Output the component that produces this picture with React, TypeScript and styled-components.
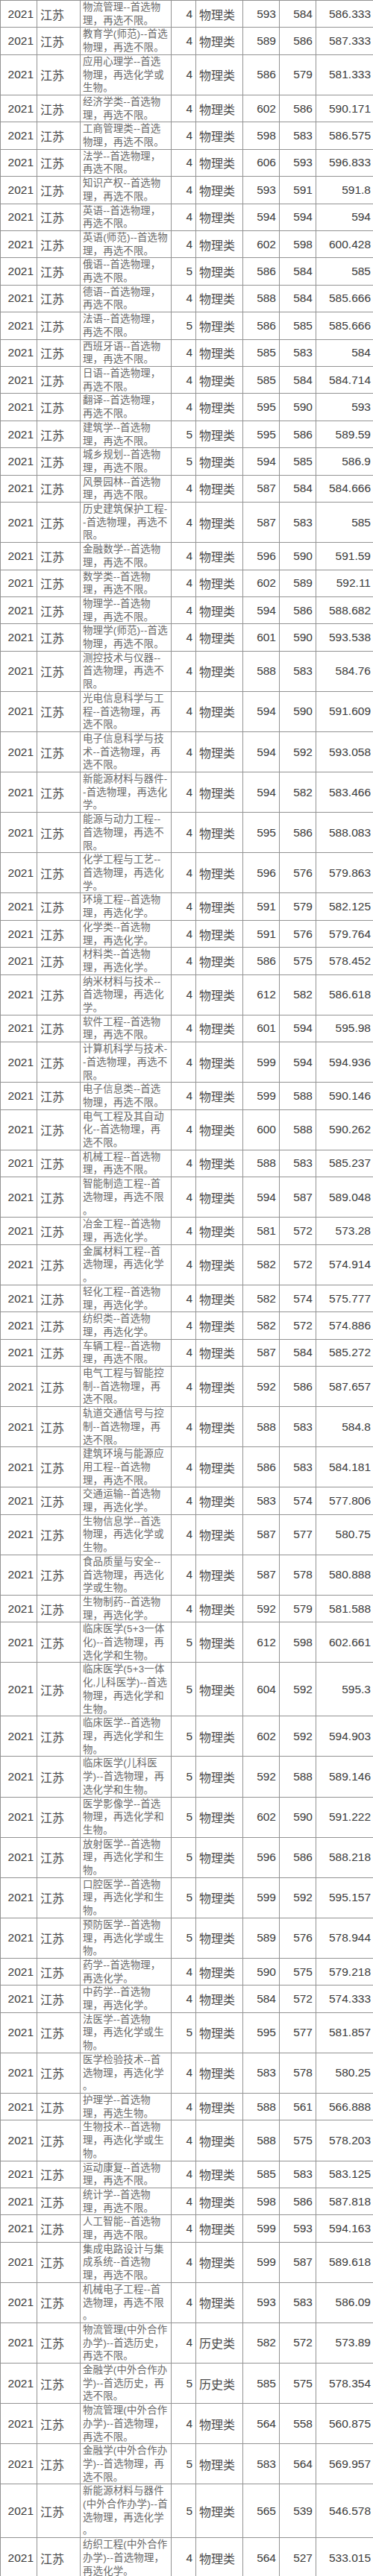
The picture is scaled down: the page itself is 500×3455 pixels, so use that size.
import React from 'react'
import styled, { createGlobalStyle } from 'styled-components'

const GlobalStyle = createGlobalStyle`
  html, body {
    margin: 0;
    padding: 0;
    background: #fff;
  }
`

type Track = '物理类' | '历史类'

interface ScoreRow {
  major: string
  years: number
  track: Track
  max: number
  min: number
  avg: string
}

// lines of the major column are broken where the source sheet breaks them
const rows: ScoreRow[] = [
  { major: '物流管理--首选物\n理，再选不限。', years: 4, track: '物理类', max: 593, min: 584, avg: '586.333' },
  { major: '教育学(师范)--首选\n物理，再选不限。', years: 4, track: '物理类', max: 589, min: 586, avg: '587.333' },
  { major: '应用心理学--首选\n物理，再选化学或\n生物。', years: 4, track: '物理类', max: 586, min: 579, avg: '581.333' },
  { major: '经济学类--首选物\n理，再选不限。', years: 4, track: '物理类', max: 602, min: 586, avg: '590.171' },
  { major: '工商管理类--首选\n物理，再选不限。', years: 4, track: '物理类', max: 598, min: 583, avg: '586.575' },
  { major: '法学--首选物理，\n再选不限。', years: 4, track: '物理类', max: 606, min: 593, avg: '596.833' },
  { major: '知识产权--首选物\n理，再选不限。', years: 4, track: '物理类', max: 593, min: 591, avg: '591.8' },
  { major: '英语--首选物理，\n再选不限。', years: 4, track: '物理类', max: 594, min: 594, avg: '594' },
  { major: '英语(师范)--首选物\n理，再选不限。', years: 4, track: '物理类', max: 602, min: 598, avg: '600.428' },
  { major: '俄语--首选物理，\n再选不限。', years: 5, track: '物理类', max: 586, min: 584, avg: '585' },
  { major: '德语--首选物理，\n再选不限。', years: 4, track: '物理类', max: 588, min: 584, avg: '585.666' },
  { major: '法语--首选物理，\n再选不限。', years: 5, track: '物理类', max: 586, min: 585, avg: '585.666' },
  { major: '西班牙语--首选物\n理，再选不限。', years: 4, track: '物理类', max: 585, min: 583, avg: '584' },
  { major: '日语--首选物理，\n再选不限。', years: 4, track: '物理类', max: 585, min: 584, avg: '584.714' },
  { major: '翻译--首选物理，\n再选不限。', years: 4, track: '物理类', max: 595, min: 590, avg: '593' },
  { major: '建筑学--首选物\n理，再选不限。', years: 5, track: '物理类', max: 595, min: 586, avg: '589.59' },
  { major: '城乡规划--首选物\n理，再选不限。', years: 5, track: '物理类', max: 594, min: 585, avg: '586.9' },
  { major: '风景园林--首选物\n理，再选不限。', years: 4, track: '物理类', max: 587, min: 584, avg: '584.666' },
  { major: '历史建筑保护工程-\n-首选物理，再选不\n限。', years: 4, track: '物理类', max: 587, min: 583, avg: '585' },
  { major: '金融数学--首选物\n理，再选不限。', years: 4, track: '物理类', max: 596, min: 590, avg: '591.59' },
  { major: '数学类--首选物\n理，再选不限。', years: 4, track: '物理类', max: 602, min: 589, avg: '592.11' },
  { major: '物理学--首选物\n理，再选不限。', years: 4, track: '物理类', max: 594, min: 586, avg: '588.682' },
  { major: '物理学(师范)--首选\n物理，再选不限。', years: 4, track: '物理类', max: 601, min: 590, avg: '593.538' },
  { major: '测控技术与仪器--\n首选物理，再选不\n限。', years: 4, track: '物理类', max: 588, min: 583, avg: '584.76' },
  { major: '光电信息科学与工\n程--首选物理，再\n选不限。', years: 4, track: '物理类', max: 594, min: 590, avg: '591.609' },
  { major: '电子信息科学与技\n术--首选物理，再\n选不限。', years: 4, track: '物理类', max: 594, min: 592, avg: '593.058' },
  { major: '新能源材料与器件-\n-首选物理，再选化\n学。', years: 4, track: '物理类', max: 594, min: 582, avg: '583.466' },
  { major: '能源与动力工程--\n首选物理，再选不\n限。', years: 4, track: '物理类', max: 595, min: 586, avg: '588.083' },
  { major: '化学工程与工艺--\n首选物理，再选化\n学。', years: 4, track: '物理类', max: 596, min: 576, avg: '579.863' },
  { major: '环境工程--首选物\n理，再选化学。', years: 4, track: '物理类', max: 591, min: 579, avg: '582.125' },
  { major: '化学类--首选物\n理，再选化学。', years: 4, track: '物理类', max: 591, min: 576, avg: '579.764' },
  { major: '材料类--首选物\n理，再选化学。', years: 4, track: '物理类', max: 586, min: 575, avg: '578.452' },
  { major: '纳米材料与技术--\n首选物理，再选化\n学。', years: 4, track: '物理类', max: 612, min: 582, avg: '586.618' },
  { major: '软件工程--首选物\n理，再选不限。', years: 4, track: '物理类', max: 601, min: 594, avg: '595.98' },
  { major: '计算机科学与技术-\n-首选物理，再选不\n限。', years: 4, track: '物理类', max: 599, min: 594, avg: '594.936' },
  { major: '电子信息类--首选\n物理，再选不限。', years: 4, track: '物理类', max: 599, min: 588, avg: '590.146' },
  { major: '电气工程及其自动\n化--首选物理，再\n选不限。', years: 4, track: '物理类', max: 600, min: 588, avg: '590.262' },
  { major: '机械工程--首选物\n理，再选不限。', years: 4, track: '物理类', max: 588, min: 583, avg: '585.237' },
  { major: '智能制造工程--首\n选物理，再选不限\n。', years: 4, track: '物理类', max: 594, min: 587, avg: '589.048' },
  { major: '冶金工程--首选物\n理，再选化学。', years: 4, track: '物理类', max: 581, min: 572, avg: '573.28' },
  { major: '金属材料工程--首\n选物理，再选化学\n。', years: 4, track: '物理类', max: 582, min: 572, avg: '574.914' },
  { major: '轻化工程--首选物\n理，再选化学。', years: 4, track: '物理类', max: 582, min: 574, avg: '575.777' },
  { major: '纺织类--首选物\n理，再选化学。', years: 4, track: '物理类', max: 582, min: 572, avg: '574.886' },
  { major: '车辆工程--首选物\n理，再选不限。', years: 4, track: '物理类', max: 587, min: 584, avg: '585.272' },
  { major: '电气工程与智能控\n制--首选物理，再\n选不限。', years: 4, track: '物理类', max: 592, min: 586, avg: '587.657' },
  { major: '轨道交通信号与控\n制--首选物理，再\n选不限。', years: 4, track: '物理类', max: 588, min: 583, avg: '584.8' },
  { major: '建筑环境与能源应\n用工程--首选物\n理，再选不限。', years: 4, track: '物理类', max: 586, min: 583, avg: '584.181' },
  { major: '交通运输--首选物\n理，再选化学。', years: 4, track: '物理类', max: 583, min: 574, avg: '577.806' },
  { major: '生物信息学--首选\n物理，再选化学或\n生物。', years: 4, track: '物理类', max: 587, min: 577, avg: '580.75' },
  { major: '食品质量与安全--\n首选物理，再选化\n学或生物。', years: 4, track: '物理类', max: 587, min: 578, avg: '580.888' },
  { major: '生物制药--首选物\n理，再选化学。', years: 4, track: '物理类', max: 592, min: 579, avg: '581.588' },
  { major: '临床医学(5+3一体\n化)--首选物理，再\n选化学和生物。', years: 5, track: '物理类', max: 612, min: 598, avg: '602.661' },
  { major: '临床医学(5+3一体\n化,儿科医学)--首选\n物理，再选化学和\n生物。', years: 5, track: '物理类', max: 604, min: 592, avg: '595.3' },
  { major: '临床医学--首选物\n理，再选化学和生\n物。', years: 5, track: '物理类', max: 602, min: 592, avg: '594.903' },
  { major: '临床医学(儿科医\n学)--首选物理，再\n选化学和生物。', years: 5, track: '物理类', max: 592, min: 588, avg: '589.146' },
  { major: '医学影像学--首选\n物理，再选化学和\n生物。', years: 5, track: '物理类', max: 602, min: 590, avg: '591.222' },
  { major: '放射医学--首选物\n理，再选化学和生\n物。', years: 5, track: '物理类', max: 596, min: 586, avg: '588.218' },
  { major: '口腔医学--首选物\n理，再选化学和生\n物。', years: 5, track: '物理类', max: 599, min: 592, avg: '595.157' },
  { major: '预防医学--首选物\n理，再选化学或生\n物。', years: 5, track: '物理类', max: 589, min: 576, avg: '578.944' },
  { major: '药学--首选物理，\n再选化学。', years: 4, track: '物理类', max: 590, min: 575, avg: '579.218' },
  { major: '中药学--首选物\n理，再选化学。', years: 4, track: '物理类', max: 584, min: 572, avg: '574.333' },
  { major: '法医学--首选物\n理，再选化学或生\n物。', years: 5, track: '物理类', max: 595, min: 577, avg: '581.857' },
  { major: '医学检验技术--首\n选物理，再选化学\n。', years: 4, track: '物理类', max: 583, min: 578, avg: '580.25' },
  { major: '护理学--首选物\n理，再选生物。', years: 4, track: '物理类', max: 588, min: 561, avg: '566.888' },
  { major: '生物技术--首选物\n理，再选化学或生\n物。', years: 4, track: '物理类', max: 588, min: 575, avg: '578.203' },
  { major: '运动康复--首选物\n理，再选不限。', years: 4, track: '物理类', max: 585, min: 583, avg: '583.125' },
  { major: '统计学--首选物\n理，再选不限。', years: 4, track: '物理类', max: 598, min: 586, avg: '587.818' },
  { major: '人工智能--首选物\n理，再选不限。', years: 4, track: '物理类', max: 599, min: 593, avg: '594.163' },
  { major: '集成电路设计与集\n成系统--首选物\n理，再选不限。', years: 4, track: '物理类', max: 599, min: 587, avg: '589.618' },
  { major: '机械电子工程--首\n选物理，再选不限\n。', years: 4, track: '物理类', max: 593, min: 583, avg: '586.09' },
  { major: '物流管理(中外合作\n办学)--首选历史，\n再选不限。', years: 4, track: '历史类', max: 582, min: 572, avg: '573.89' },
  { major: '金融学(中外合作办\n学)--首选历史，再\n选不限。', years: 5, track: '历史类', max: 585, min: 575, avg: '578.354' },
  { major: '物流管理(中外合作\n办学)--首选物理，\n再选不限。', years: 4, track: '物理类', max: 564, min: 558, avg: '560.875' },
  { major: '金融学(中外合作办\n学)--首选物理，再\n选不限。', years: 5, track: '物理类', max: 583, min: 564, avg: '569.957' },
  { major: '新能源材料与器件\n(中外合作办学)--首\n选物理，再选化学\n。', years: 5, track: '物理类', max: 565, min: 539, avg: '546.578' },
  { major: '纺织工程(中外合作\n办学)--首选物理，\n再选化学。', years: 4, track: '物理类', max: 564, min: 527, avg: '533.015' },
]

const Sheet = styled.table`
  width: 500px;
  table-layout: fixed;
  border-collapse: collapse;
  background: #fff;
`

const Col = styled.col<{ $w: number }>`
  width: ${({ $w }) => $w}px;
`

const Row = styled.tr``

const Cell = styled.td<{ $align?: 'left' | 'right'; $pad?: number }>`
  border: 1px solid #939393;
  padding: 0 ${({ $align, $pad }) => ($align === 'left' ? 0 : $pad ?? 4)}px 0
    ${({ $align, $pad }) => ($align === 'left' ? $pad ?? 4 : 0)}px;
  text-align: ${({ $align }) => $align ?? 'right'};
  vertical-align: middle;
  white-space: nowrap;
  overflow: hidden;
`

const NumberCell = styled(Cell)`
  font-family: 'Liberation Sans', Arial, sans-serif;
  font-size: 15.5px;
  color: #3b3b3b;
`

const LabelCell = styled(Cell)`
  font-family: 'Noto Sans CJK SC', sans-serif;
  font-size: 16px;
  color: #4a4a4a;
`

const MajorCell = styled(Cell)`
  font-family: 'Liberation Sans', 'Noto Sans CJK SC', sans-serif;
  font-size: 13.4px;
  line-height: 17.7px;
  color: #6a6a6a;
  white-space: pre;
  letter-spacing: 0.2px;
`

const widths = [49, 58, 122, 33, 63, 49, 49, 77]

export default function App() {
  return (
    <>
      <GlobalStyle />
      <Sheet>
        <colgroup>
          {widths.map((w, i) => (
            <Col key={i} $w={w} />
          ))}
        </colgroup>
        <tbody>
          {rows.map((r, i) => (
            <Row key={i}>
              <NumberCell>2021</NumberCell>
              <LabelCell $align="left">江苏</LabelCell>
              <MajorCell $align="left" $pad={3}>
                {r.major}
              </MajorCell>
              <NumberCell>{r.years}</NumberCell>
              <LabelCell $align="left">{r.track}</LabelCell>
              <NumberCell>{r.max}</NumberCell>
              <NumberCell>{r.min}</NumberCell>
              <NumberCell $pad={3}>{r.avg}</NumberCell>
            </Row>
          ))}
        </tbody>
      </Sheet>
    </>
  )
}
